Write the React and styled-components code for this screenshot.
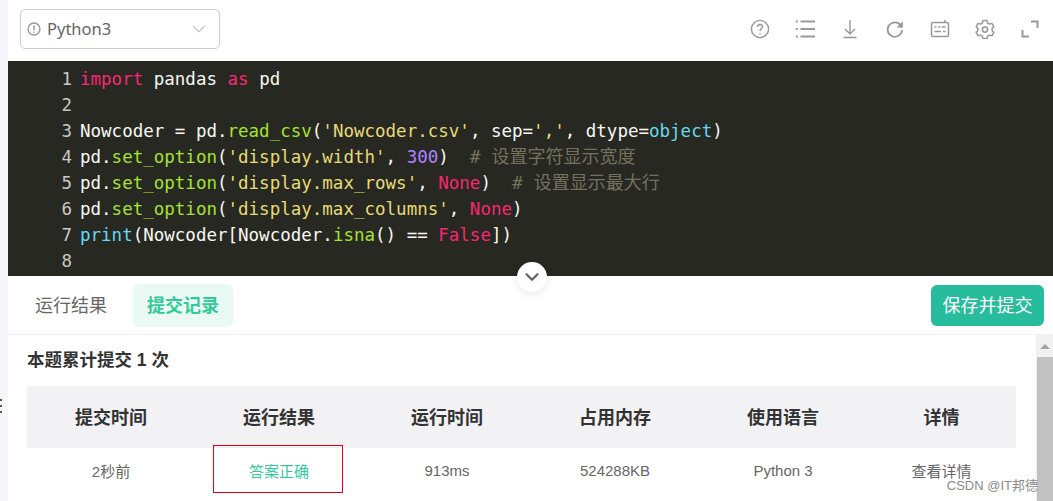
import React from 'react';
import styled, { createGlobalStyle } from 'styled-components';
import { ChevronDown } from 'lucide-react';

const GlobalStyle = createGlobalStyle`
  html, body {
    margin: 0;
    padding: 0;
    background: #fff;
  }
  body {
    font-family: "Liberation Sans", "Noto Sans CJK SC", sans-serif;
  }
`;

const Page = styled.div`
  width: 1053px;
  height: 501px;
  overflow: hidden;
  display: flex;
  background: #fff;
`;

const LeftRail = styled.div`
  width: 8px;
  flex: none;
  background: #f5f6fa;
  position: relative;
`;

const RailDots = styled.span`
  position: absolute;
  left: 0;
  top: 399px;
  width: 2px;
  height: 15px;
  background: repeating-linear-gradient(#555 0 2px, transparent 2px 6px);
`;

const Main = styled.div`
  flex: 1;
  min-width: 0;
  display: flex;
  flex-direction: column;
  position: relative;
`;

const Toolbar = styled.div`
  height: 61px;
  flex: none;
  display: flex;
  align-items: center;
  justify-content: space-between;
  padding: 0 13px 4px 12px;
  box-sizing: border-box;
`;

const Select = styled.div`
  width: 200px;
  height: 40px;
  box-sizing: border-box;
  border: 1px solid #c9cdd4;
  border-radius: 5px;
  display: flex;
  align-items: center;
  padding: 0 9px 0 6px;
  color: #666;
  font-size: 16.5px;
`;

const SelectLabel = styled.span`
  flex: 1;
  margin-left: 6px;
  font-family: "Noto Sans", "Liberation Sans", sans-serif;
`;

const Tools = styled.div`
  display: flex;
  align-items: center;
  gap: 25px;
`;

const Tool = styled.svg`
  width: 20px;
  height: 20px;
  fill: none;
  stroke: #999;
  stroke-width: 1.4;
  display: block;
`;

const Editor = styled.div`
  height: 215px;
  flex: none;
  background: #272822;
  box-sizing: border-box;
  padding-top: 5px;
  font-family: "DejaVu Sans Mono", "Liberation Mono", monospace;
  font-size: 17.5px;
  line-height: 26px;
  color: #f8f8f2;
  overflow: hidden;
`;

const CodeLine = styled.div`
  display: flex;
  height: 26px;
  white-space: pre;
`;

const LineNo = styled.span`
  width: 64px;
  flex: none;
  text-align: right;
  color: #c8c8c2;
  margin-right: 8px;
`;

const Kw = styled.span`color: #f92672;`;
const Fn = styled.span`color: #a6e22e;`;
const Str = styled.span`color: #e6db74;`;
const Num = styled.span`color: #ae81ff;`;
const Blue = styled.span`color: #66d9ef;`;
const Comment = styled.span`
  color: #75715e;
  font-family: "DejaVu Sans Mono", "Noto Sans CJK SC", monospace;
  font-size: 18px;
`;

const Collapse = styled.div`
  position: absolute;
  left: 509px;
  top: 262px;
  width: 30px;
  height: 30px;
  border-radius: 50%;
  background: #fff;
  box-shadow: 0 2px 8px rgba(0, 0, 0, 0.1);
  display: flex;
  align-items: center;
  justify-content: center;
  color: #666;
`;

const TabBar = styled.div`
  height: 59px;
  flex: none;
  box-sizing: border-box;
  border-bottom: 1px solid #f0f1f3;
  display: flex;
  align-items: center;
  padding: 0 9px 0 13px;
`;

const Tab = styled.div`
  height: 43px;
  padding: 0 14px 2px;
  box-sizing: border-box;
  margin-right: 12px;
  border-radius: 6px;
  display: flex;
  align-items: center;
  font-size: 18px;
  color: ${props => (props.$active ? '#32ca99' : '#666')};
  background: ${props => (props.$active ? '#ebf9f5' : 'transparent')};
  font-weight: ${props => (props.$active ? 700 : 400)};
`;

const SubmitButton = styled.button`
  margin-left: auto;
  width: 113px;
  height: 41px;
  border: 0;
  border-radius: 6px;
  background: #27bc9b;
  color: #fff;
  font-family: inherit;
  font-size: 18px;
  padding: 0 0 2px;
`;

const Results = styled.div`
  flex: 1;
  min-height: 0;
  display: flex;
`;

const ResultsBody = styled.div`
  flex: 1;
  min-width: 0;
  padding: 13px 20px 0 19px;
`;

const Summary = styled.div`
  font-size: 17.5px;
  font-weight: 700;
  color: #333;
  line-height: 24px;
  margin-bottom: 14px;
`;

const Row = styled.div`
  display: grid;
  grid-template-columns: repeat(5, 168px) 149px;
  height: ${props => (props.$head ? '62px' : '46px')};
  background: ${props => (props.$head ? '#f2f2f5' : 'transparent')};
`;

const Cell = styled.div`
  position: relative;
  display: flex;
  align-items: center;
  justify-content: center;
  padding-bottom: 2px;
  box-sizing: border-box;
  font-size: ${props => (props.$head ? '18px' : '15px')};
  font-weight: ${props => (props.$head ? 700 : 400)};
  color: ${props => props.$color || (props.$head ? '#333' : '#666')};
`;

const Highlight = styled.div`
  position: absolute;
  left: 18px;
  top: -3px;
  width: 130px;
  height: 48px;
  box-sizing: border-box;
  border: 1px solid #e60012;
`;

const Scrollbar = styled.div`
  width: 17px;
  flex: none;
  background: #f1f1f1;
  display: flex;
  flex-direction: column;
`;

const ScrollArrow = styled.div`
  height: 22px;
  flex: none;
  display: flex;
  align-items: center;
  justify-content: center;
  &::before {
    content: '';
    border-left: 5px solid transparent;
    border-right: 5px solid transparent;
    border-bottom: 5px solid #a3a3a3;
  }
`;

const ScrollThumb = styled.div`
  flex: 1;
  margin-left: 1px;
  background: #c1c1c1;
`;

const Watermark = styled.div`
  position: absolute;
  right: 15px;
  bottom: 7px;
  font-size: 13px;
  color: #8a8a8a;
  background: transparent;
`;

const icons = [
  <>
    <circle cx="10" cy="10" r="8.6" />
    <path d="M7.6 8c0-1.5 1-2.5 2.5-2.5s2.4 1 2.4 2.2c0 1.9-2.5 2-2.5 4.3" />
    <path d="M10 14.2v1.2" />
  </>,
  <>
    <path d="M5.5 2.5h15M5.5 10h15M5.5 17.5h15" strokeWidth="1.8" />
    <path d="M.8 2.5h2M.8 10h2M.8 17.5h2" strokeWidth="2" />
  </>,
  <>
    <path d="M10 1v13.5M5 10l5 5 5-5" />
    <path d="M3.5 18.5h13" strokeWidth="1.6" />
  </>,
  <>
    <path d="M16.7 8.5A7.2 7.2 0 1 0 17 11" strokeWidth="1.8" />
    <path d="M17.8 2.2v6.3h-6.3z" fill="#999" stroke="none" />
  </>,
  <>
    <rect x="1.5" y="3.5" width="17" height="14" rx="1.5" strokeWidth="1.5" />
    <path d="M15 3.5V1M4.5 8h2M8 8h2M11.5 8h4M4.5 12.5h6.5M13 12.5h2.5" strokeWidth="1.5" />
  </>,
  <>
    <path d="M8 1.6h4l.6 2.4 1.9 1.1 2.4-.7 2 3.4-1.8 1.7v2.2l1.8 1.7-2 3.4-2.4-.7-1.9 1.1-.6 2.4H8l-.6-2.4-1.9-1.1-2.4.7-2-3.4 1.8-1.7V9.5L1.1 7.8l2-3.4 2.4.7 1.9-1.1z" strokeLinejoin="round" strokeWidth="1.5" />
    <circle cx="10" cy="10.6" r="2.6" strokeWidth="1.6" />
  </>,
  <>
    <path d="M11 2.5h6.5v6.5M2.5 11v6.5H9" strokeWidth="2" />
  </>,
];

const heads = ['提交时间', '运行结果', '运行时间', '占用内存', '使用语言', '详情'];

const App = () => (
  <Page>
    <GlobalStyle />
    <LeftRail>
      <RailDots />
    </LeftRail>
    <Main>
      <Toolbar>
        <Select>
          <Tool as="svg" viewBox="0 0 20 20" style={{ width: 14, height: 14 }}>
            <circle cx="10" cy="10" r="8.5" strokeWidth="2" />
            <path d="M10 5v6.5M10 13.5v1.8" strokeWidth="2.2" />
          </Tool>
          <SelectLabel>Python3</SelectLabel>
          <ChevronDown size={22} color="#c2c7d0" strokeWidth={1.2} />
        </Select>
        <Tools>
          {icons.map((icon, i) => (
            <Tool key={i} viewBox="0 0 20 20">{icon}</Tool>
          ))}
        </Tools>
      </Toolbar>
      <Editor>
        <CodeLine><LineNo>1</LineNo><span><Kw>import</Kw> pandas <Kw>as</Kw> pd</span></CodeLine>
        <CodeLine><LineNo>2</LineNo></CodeLine>
        <CodeLine><LineNo>3</LineNo><span>Nowcoder = pd.<Fn>read_csv</Fn>(<Str>'Nowcoder.csv'</Str>, sep=<Str>','</Str>, dtype=<Blue>object</Blue>)</span></CodeLine>
        <CodeLine><LineNo>4</LineNo><span>pd.<Fn>set_option</Fn>(<Str>'display.width'</Str>, <Num>300</Num>)  <Comment># 设置字符显示宽度</Comment></span></CodeLine>
        <CodeLine><LineNo>5</LineNo><span>pd.<Fn>set_option</Fn>(<Str>'display.max_rows'</Str>, <Kw>None</Kw>)  <Comment># 设置显示最大行</Comment></span></CodeLine>
        <CodeLine><LineNo>6</LineNo><span>pd.<Fn>set_option</Fn>(<Str>'display.max_columns'</Str>, <Kw>None</Kw>)</span></CodeLine>
        <CodeLine><LineNo>7</LineNo><span><Blue>print</Blue>(Nowcoder[Nowcoder.<Fn>isna</Fn>() == <Kw>False</Kw>])</span></CodeLine>
        <CodeLine><LineNo>8</LineNo></CodeLine>
      </Editor>
      <Collapse>
        <ChevronDown size={22} strokeWidth={2.6} />
      </Collapse>
      <TabBar>
        <Tab>运行结果</Tab>
        <Tab $active>提交记录</Tab>
        <SubmitButton>保存并提交</SubmitButton>
      </TabBar>
      <Results>
        <ResultsBody>
          <Summary>本题累计提交 1 次</Summary>
          <Row $head>
            {heads.map(h => <Cell key={h} $head>{h}</Cell>)}
          </Row>
          <Row>
            <Cell>2秒前</Cell>
            <Cell $color="#32ca99">答案正确<Highlight /></Cell>
            <Cell>913ms</Cell>
            <Cell>524288KB</Cell>
            <Cell>Python 3</Cell>
            <Cell>查看详情</Cell>
          </Row>
        </ResultsBody>
        <Scrollbar>
          <ScrollArrow />
          <ScrollThumb />
        </Scrollbar>
      </Results>
      <Watermark>CSDN @IT邦德</Watermark>
    </Main>
  </Page>
);

export default App;
